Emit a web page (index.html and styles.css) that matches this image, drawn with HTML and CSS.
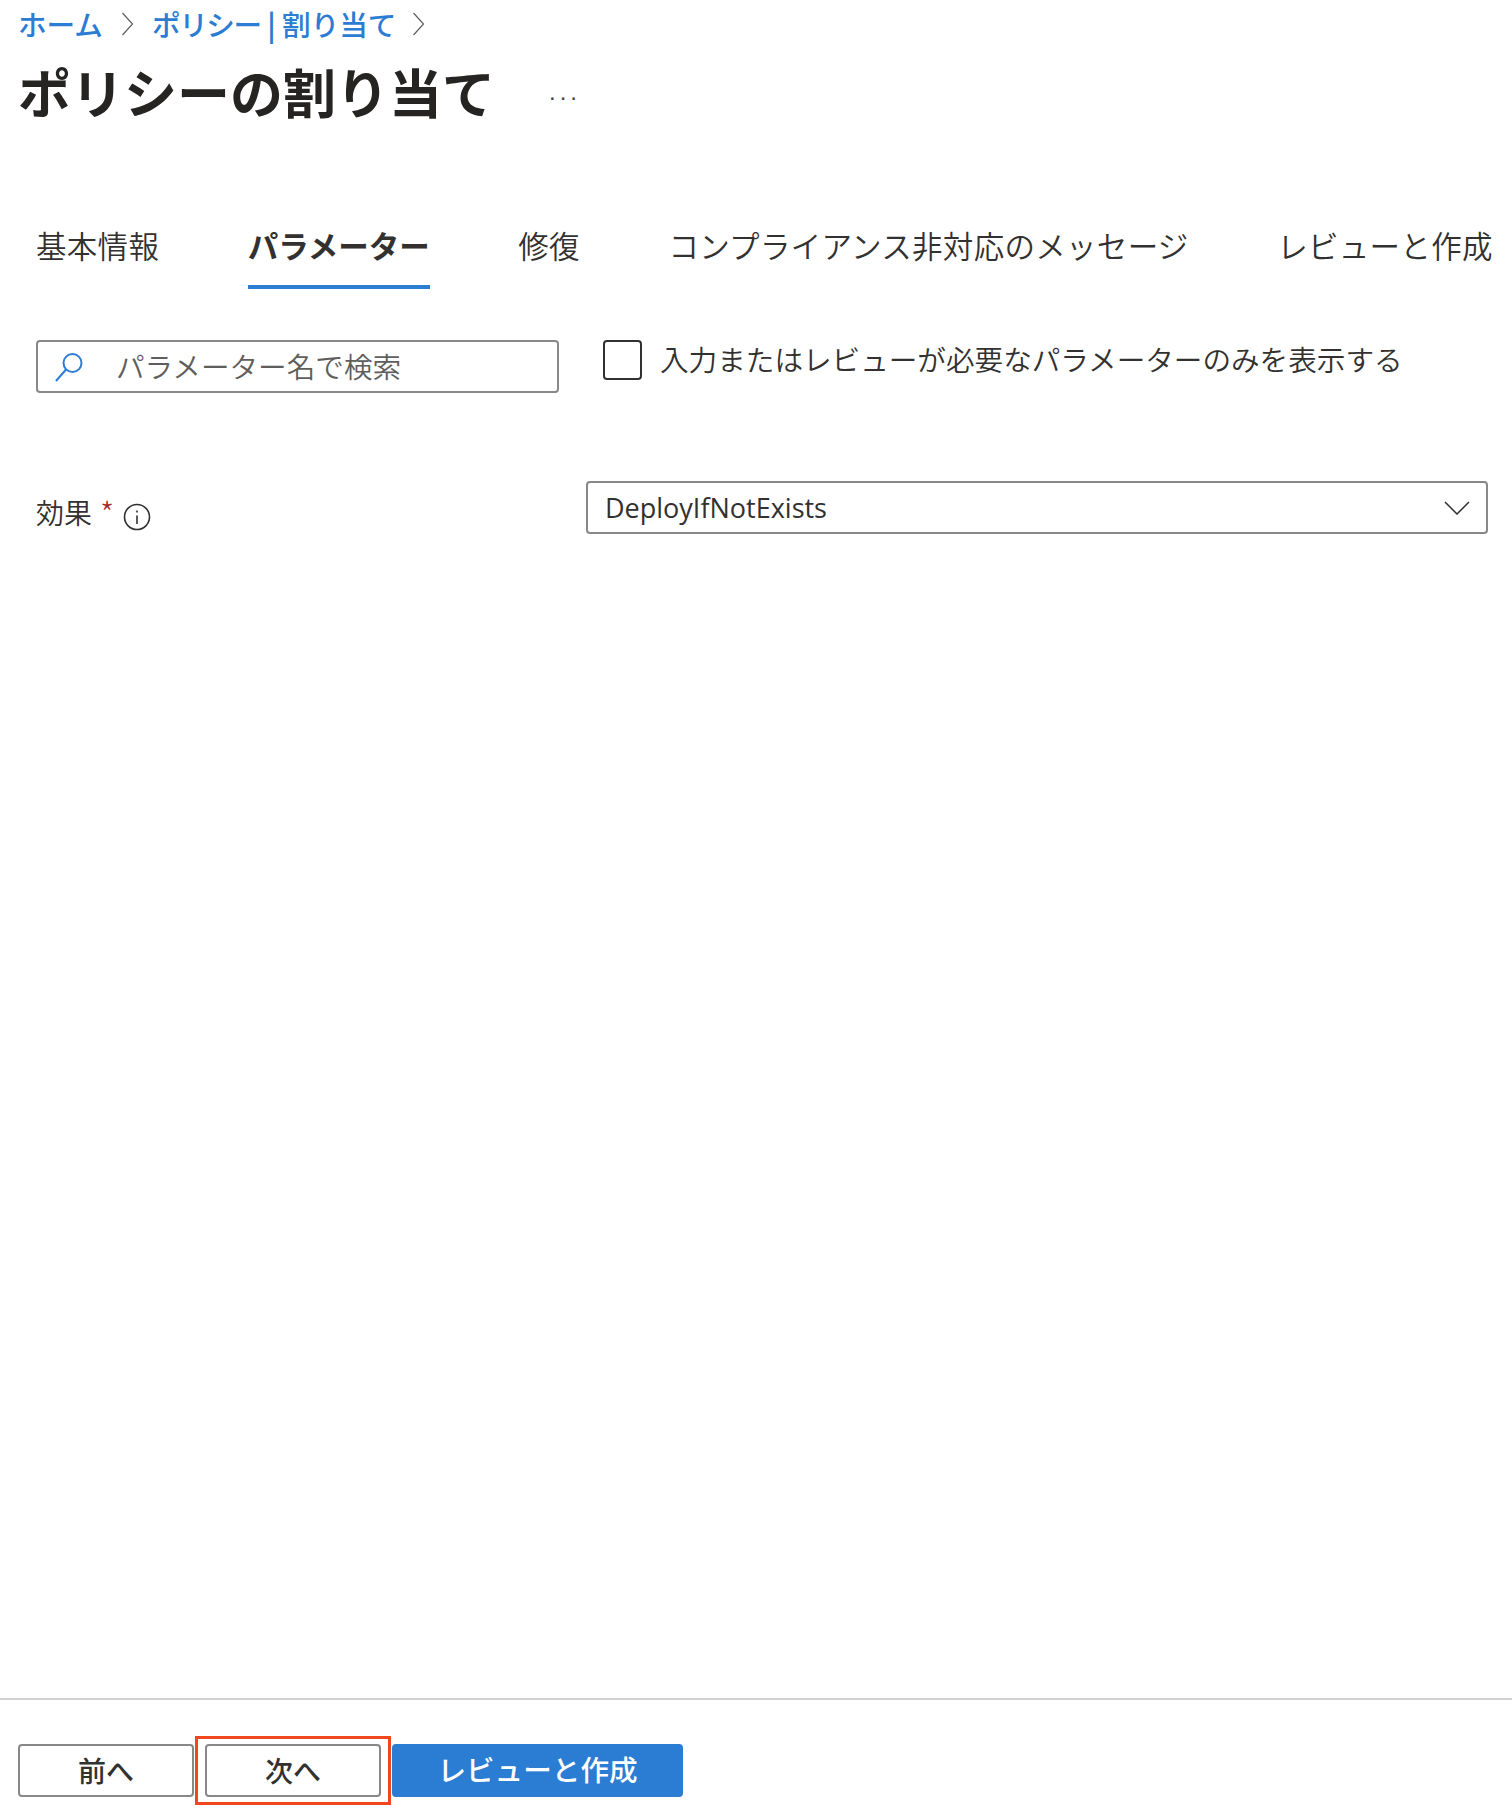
FILE: index.html
```html
<!DOCTYPE html>
<html lang="ja">
<head>
<meta charset="utf-8">
<title>ポリシーの割り当て</title>
<link rel="stylesheet" href="styles.css">
</head>
<body>
<div class="page">
  <main class="main">
    <nav class="crumbs">
      <a class="crumb">ホーム</a>
      <svg class="chev" viewBox="0 0 12 24"><path d="M1 1l10 11L1 23"/></svg>
      <a class="crumb"><span class="tight">ポリシー</span> <span class="pipe">|</span> 割り当て</a>
      <svg class="chev last" viewBox="0 0 12 24"><path d="M1 1l10 11L1 23"/></svg>
    </nav>
    <header class="head">
      <h1 class="title">ポリシーの割り当て</h1>
      <span class="more">...</span>
    </header>
    <div class="tabs">
      <span class="tab">基本情報</span>
      <span class="tab active">パラメーター</span>
      <span class="tab">修復</span>
      <span class="tab">コンプライアンス非対応のメッセージ</span>
      <span class="tab">レビューと作成</span>
    </div>
    <div class="filters">
      <div class="search">
        <svg class="search-icon" viewBox="0 0 30 30"><circle cx="18.5" cy="11" r="9"/><path d="M12 17.500L2 29"/></svg>
        <span class="placeholder">パラメーター名で検索</span>
      </div>
      <div class="check">
        <span class="box"></span>
        <span class="check-label">入力またはレビューが必要なパラメーターのみを表示する</span>
      </div>
    </div>
    <div class="field">
      <div class="label">
        <span>効果</span>
        <span class="star">*</span>
        <svg class="info" viewBox="0 0 28 28"><circle cx="14" cy="14" r="12.500"/><path d="M14 12.500v8.500M14 7.500v2"/></svg>
      </div>
      <div class="select">
        <span class="value">DeployIfNotExists</span>
        <svg class="down" viewBox="0 0 26 14"><path d="M1 1l12 12L25 1"/></svg>
      </div>
    </div>
  </main>
  <footer class="foot">
    <button class="btn">前へ</button>
    <button class="btn marked">次へ</button>
    <button class="btn primary">レビューと作成</button>
  </footer>
</div>
</body>
</html>
```
FILE: styles.css
```css
* { box-sizing: border-box; }
html, body { margin: 0; padding: 0; background: #fff; }
body {
  font-family: "Noto Sans CJK JP", "Noto Sans", sans-serif;
  color: #323130;
}
.page { min-height: 1818px; display: flex; flex-direction: column; }
.main { flex: 1; }
.crumbs {
  height: 48px;
  padding: 0 0 2px 18px;
  display: flex;
  align-items: center;
  font-size: 28.6px;
  font-weight: 500;
  color: #2b7cd3;
}
.crumb { white-space: nowrap; }
.tight { letter-spacing: -1.4px; }
.pipe { font-weight: 700; }
.chev { width: 13px; height: 24px; margin: 1px 18px 0; fill: none; stroke: #605e5c; stroke-width: 1.2; }
.chev.last { margin-left: 16px; }
.head { height: 90px; padding-left: 18px; display: flex; align-items: center; padding-bottom: 3px; }
.title { margin: 0; font-size: 53px; font-weight: 700; line-height: 1; color: #252423; white-space: nowrap; }
.more { margin-left: 54px; font-size: 24px; color: #484644; letter-spacing: 4px; font-family: "Liberation Sans", sans-serif; }
.tabs {
  margin-top: 70px;
  padding-left: 36px;
  display: flex;
  gap: 88.5px;
  font-size: 30.5px;
  white-space: nowrap;
}
.tab { height: 81px; padding-top: 15px; line-height: 45px; color: #323130; font-weight: 350; letter-spacing: 0.3px; }
.tab.active { font-weight: 700; letter-spacing: 0; border-bottom: 4px solid #2b7cd3; }
.filters { margin-top: 51px; padding-left: 36px; display: flex; }
.search {
  width: 523px;
  height: 53px;
  border: 2px solid #8a8886;
  border-radius: 4px;
  display: flex;
  align-items: center;
  padding: 0 0 2px 16px;
}
.search-icon { width: 30px; height: 30px; margin-top: 2px; fill: none; stroke: #2b7cd3; stroke-width: 2; }
.placeholder { margin-left: 32px; font-size: 28.6px; font-weight: 350; color: #605e5c; white-space: nowrap; }
.check { margin-left: 44px; display: flex; align-items: flex-start; }
.box { width: 39px; height: 40px; border: 2px solid #323130; border-radius: 4px; }
.check-label { margin-left: 18px; font-size: 28.6px; font-weight: 350; line-height: 38px; white-space: nowrap; }
.field { margin-top: 88px; padding-left: 36px; display: flex; justify-content: space-between; padding-right: 24px; }
.label { display: flex; align-items: center; font-size: 28px; font-weight: 350; height: 62px; }
.star { margin-left: 8px; font-size: 32px; font-weight: 300; line-height: 1; color: #a4262c; }
.info { width: 28px; height: 28px; margin-left: 9px; margin-top: 10px; fill: none; stroke: #323130; stroke-width: 1.600; }
.select {
  width: 902px;
  height: 53px;
  border: 2px solid #8a8886;
  border-radius: 4px;
  display: flex;
  align-items: center;
  justify-content: space-between;
  padding: 0 16px 0 17px;
}
.value { font-family: "Open Sans", sans-serif; font-size: 27px; color: #323130; }
.down { width: 26px; height: 14px; fill: none; stroke: #323130; stroke-width: 1.500; }
.foot {
  height: 120px;
  border-top: 2px solid #d2d2d2;
  padding: 44px 0 0 18px;
  display: flex;
  align-items: flex-start;
  gap: 11px;
}
.btn {
  width: 176px;
  height: 53px;
  padding: 0 0 2px;
  background: #fff;
  border: 2px solid #8a8886;
  border-radius: 4px;
  font-family: inherit;
  font-size: 28px;
  font-weight: 500;
  line-height: 1;
  color: #323130;
}
.marked { position: relative; }
.marked::after {
  content: "";
  position: absolute;
  inset: -10px -12px -10px -12px;
  border: 3px solid #f0481c;
}
.primary { width: 291px; background: #2b7cd3; border-color: #2b7cd3; color: #fff; font-size: 28.6px; }
```
